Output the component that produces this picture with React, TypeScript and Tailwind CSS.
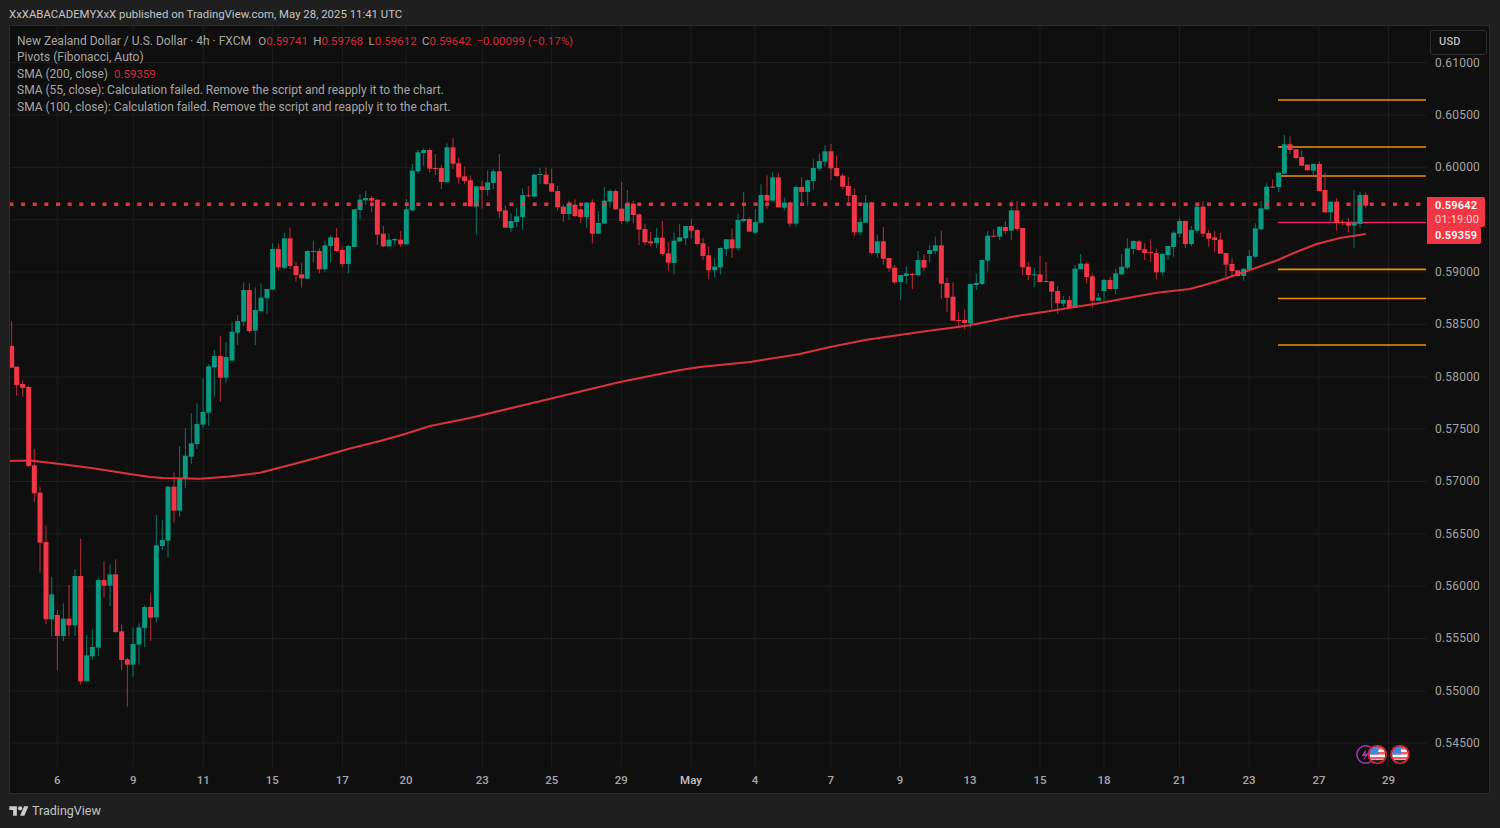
const GREEN = '#089981'
const RED = '#f23645'

type Candle = [number, number, number, number, number, 'r' | 'g'] // cx, bodyTop, bodyBottom, high, low, colour

// traced from 3x crops, so every row is in crop pixels
const traces: { x: number; y: number; rows: Candle[] }[] = [
  {
    x: 0,
    y: 320,
    rows: [
      [35, 78, 143, 5, 143, 'r'], [50, 140, 195, 140, 227, 'r'], [68, 192, 204, 180, 230, 'r'], [86, 201, 438, 197, 442, 'r'],
      [103, 436, 520, 387, 546, 'r'], [120, 518, 668, 500, 758, 'r'], [138, 666, 898, 616, 913, 'r'], [155, 823, 898, 771, 950, 'g'],
      [172, 885, 948, 870, 1050, 'r'], [190, 896, 948, 850, 963, 'g'], [207, 896, 916, 795, 950, 'r'], [225, 768, 916, 747, 948, 'g'],
      [242, 768, 1084, 657, 1094, 'r'], [260, 1006, 1084, 945, 1084, 'g'], [277, 981, 1009, 928, 1020, 'g'], [295, 780, 983, 775, 1009, 'g'],
      [312, 780, 797, 724, 834, 'r'], [330, 763, 797, 733, 858, 'g'], [347, 763, 936, 718, 939, 'r'], [365, 934, 1020, 913, 1050, 'r'],
      [382, 1018, 1034, 1012, 1160, 'r'], [399, 972, 1034, 922, 1070, 'g'], [417, 922, 974, 910, 1034, 'g'], [434, 861, 924, 856, 982, 'g'],
      [452, 861, 893, 820, 963, 'r'], [469, 676, 892, 585, 908, 'g'], [487, 660, 678, 600, 692, 'g'], [504, 500, 662, 498, 712, 'g'],
      [522, 500, 572, 457, 608, 'r'], [539, 475, 572, 378, 590, 'g'], [556, 407, 477, 325, 505, 'g'], [574, 370, 410, 279, 432, 'g'],
      [591, 312, 372, 250, 387, 'g'], [609, 276, 314, 175, 325, 'g'], [626, 139, 278, 133, 317, 'g'], [643, 108, 142, 90, 232, 'g'],
      [661, 108, 173, 48, 246, 'r'], [678, 111, 173, 67, 188, 'g'], [696, 35, 122, 6, 122, 'g'],
    ],
  },
  {
    x: 205,
    y: 220,
    rows: [
      [98, 303, 338, 285, 375, 'g'], [116, 210, 305, 187, 318, 'g'], [133, 210, 333, 190, 338, 'r'], [151, 270, 332, 202, 375, 'g'],
      [168, 233, 274, 190, 274, 'g'], [186, 207, 235, 207, 282, 'g'], [203, 87, 209, 70, 209, 'g'], [220, 87, 142, 70, 152, 'r'],
      [238, 55, 143, 38, 148, 'g'], [255, 55, 138, 22, 148, 'r'], [273, 138, 165, 125, 185, 'r'], [290, 163, 175, 128, 203, 'r'],
      [307, 93, 176, 90, 178, 'g'],
    ],
  },
  {
    x: 260,
    y: 130,
    rows: [
      [160, 363, 366, 332, 397, 'g'], [178, 363, 418, 355, 430, 'r'], [195, 346, 418, 332, 427, 'g'], [212, 322, 348, 316, 398, 'g'],
      [230, 323, 363, 294, 366, 'r'], [247, 360, 402, 350, 410, 'r'], [265, 348, 402, 345, 430, 'g'], [283, 238, 351, 238, 351, 'g'],
      [300, 209, 240, 192, 267, 'g'], [317, 204, 211, 183, 224, 'g'], [335, 204, 212, 198, 246, 'r'], [352, 209, 314, 207, 345, 'r'],
      [370, 311, 349, 288, 352, 'r'], [387, 329, 349, 310, 351, 'g'], [404, 327, 331, 325, 346, 'g'], [422, 329, 343, 303, 351, 'r'],
      [439, 238, 343, 207, 343, 'g'], [457, 122, 241, 102, 243, 'g'], [474, 67, 124, 60, 131, 'g'], [491, 60, 69, 55, 107, 'g'],
      [509, 60, 116, 55, 128, 'r'], [526, 114, 116, 72, 135, 'r'], [544, 114, 156, 105, 177, 'r'], [561, 52, 157, 40, 157, 'g'],
      [579, 52, 101, 24, 117, 'r'], [596, 100, 142, 84, 160, 'r'], [614, 139, 153, 110, 163, 'r'], [631, 151, 229, 136, 230, 'r'],
      [649, 169, 230, 169, 314, 'g'], [666, 169, 180, 154, 236, 'r'], [683, 157, 180, 122, 197, 'g'], [700, 124, 159, 117, 177, 'g'],
      [718, 124, 244, 72, 264, 'r'], [736, 241, 293, 226, 294, 'r'], [753, 273, 294, 250, 306, 'g'], [770, 259, 276, 233, 291, 'g'],
      [788, 195, 261, 175, 300, 'g'], [805, 196, 198, 168, 201, 'r'], [823, 134, 200, 130, 200, 'g'], [840, 132, 135, 113, 163, 'g'],
      [858, 134, 162, 113, 165, 'r'], [875, 160, 185, 116, 187, 'r'], [893, 183, 232, 168, 241, 'r'],
    ],
  },
  {
    x: 560,
    y: 130,
    rows: [
      [10, 230, 252, 223, 276, 'r'], [27, 220, 252, 212, 270, 'g'], [45, 224, 258, 208, 262, 'r'], [62, 238, 261, 220, 279, 'r'],
      [80, 218, 261, 216, 293, 'g'], [97, 218, 311, 208, 340, 'r'], [115, 279, 311, 243, 311, 'g'], [133, 212, 281, 171, 281, 'g'],
      [150, 183, 215, 178, 233, 'g'], [167, 183, 238, 178, 240, 'r'], [185, 236, 273, 156, 282, 'r'], [202, 220, 274, 180, 279, 'g'],
      [220, 221, 255, 212, 279, 'r'], [237, 253, 299, 250, 345, 'r'], [255, 297, 337, 282, 346, 'r'], [272, 334, 340, 306, 349, 'r'],
      [290, 323, 339, 293, 354, 'g'], [307, 323, 372, 273, 378, 'r'], [325, 370, 398, 336, 422, 'r'], [342, 332, 399, 308, 433, 'g'],
      [359, 322, 334, 282, 336, 'g'], [377, 288, 325, 288, 346, 'g'], [394, 288, 302, 267, 326, 'r'], [412, 300, 342, 296, 346, 'r'],
      [429, 340, 378, 324, 390, 'r'], [446, 376, 421, 349, 448, 'r'], [464, 410, 421, 384, 442, 'g'], [481, 354, 412, 352, 433, 'g'],
      [499, 328, 357, 328, 379, 'g'], [516, 328, 355, 296, 384, 'r'], [534, 270, 355, 250, 363, 'g'], [551, 267, 273, 186, 276, 'g'],
      [568, 267, 305, 262, 306, 'r'], [586, 276, 308, 237, 312, 'g'], [603, 195, 278, 163, 278, 'g'], [621, 195, 212, 136, 236, 'r'],
      [638, 142, 212, 127, 212, 'g'], [655, 142, 232, 130, 233, 'r'], [673, 218, 233, 203, 241, 'g'], [690, 218, 281, 218, 290, 'r'],
      [708, 171, 281, 166, 290, 'g'], [725, 171, 186, 142, 219, 'r'], [743, 151, 186, 148, 228, 'g'], [760, 114, 153, 88, 180, 'g'],
      [778, 93, 116, 70, 123, 'g'], [795, 64, 95, 46, 110, 'g'], [813, 64, 115, 42, 150, 'r'], [830, 114, 138, 76, 141, 'r'],
      [848, 137, 170, 130, 177, 'r'], [865, 168, 197, 141, 217, 'r'], [883, 195, 307, 175, 320, 'r'], [900, 276, 307, 264, 316, 'g'],
      [917, 218, 278, 195, 278, 'g'], [935, 218, 369, 215, 374, 'r'], [952, 334, 369, 314, 383, 'g'], [970, 334, 386, 291, 404, 'r'],
      [987, 384, 415, 384, 425, 'r'], [1004, 413, 457, 405, 463, 'r'], [1022, 435, 456, 435, 510, 'g'], [1039, 430, 438, 409, 461, 'g'],
    ],
  },
  {
    x: 850,
    y: 180,
    rows: [
      [187, 282, 285, 278, 327, 'r'], [204, 240, 286, 213, 287, 'g'], [222, 240, 263, 222, 272, 'r'], [239, 210, 222, 195, 248, 'g'],
      [256, 196, 213, 170, 222, 'g'], [274, 196, 311, 152, 356, 'r'], [291, 309, 353, 294, 396, 'r'], [309, 350, 422, 307, 422, 'r'],
      [326, 420, 423, 396, 445, 'r'], [344, 420, 429, 388, 449, 'r'], [361, 312, 430, 312, 445, 'g'], [379, 309, 315, 280, 330, 'g'],
      [396, 240, 312, 238, 315, 'g'], [413, 167, 242, 153, 275, 'g'], [431, 167, 170, 147, 172, 'r'], [449, 140, 170, 140, 181, 'g'],
      [466, 141, 153, 124, 162, 'r'], [484, 91, 152, 62, 179, 'g'], [501, 91, 147, 63, 152, 'r'], [518, 144, 262, 143, 286, 'r'],
      [535, 260, 285, 246, 300, 'r'], [553, 283, 286, 263, 321, 'g'], [570, 283, 306, 228, 308, 'r'], [588, 303, 306, 246, 307, 'r'],
      [605, 304, 335, 304, 387, 'r'], [623, 333, 370, 319, 402, 'r'], [640, 360, 371, 348, 380, 'g'], [658, 360, 384, 348, 386, 'r'],
      [675, 266, 384, 255, 384, 'g'], [692, 251, 268, 222, 269, 'g'], [710, 251, 291, 246, 310, 'r'], [727, 289, 362, 280, 384, 'r'],
      [745, 353, 362, 339, 362, 'g'], [762, 300, 333, 296, 362, 'g'], [780, 300, 327, 290, 328, 'r'], [797, 280, 327, 266, 342, 'g'],
      [815, 260, 283, 222, 285, 'g'], [832, 205, 263, 175, 268, 'g'], [850, 183, 207, 179, 224, 'g'], [867, 184, 210, 180, 212, 'r'],
      [884, 208, 219, 190, 240, 'r'], [902, 216, 218, 178, 246, 'r'], [919, 219, 277, 206, 298, 'r'], [937, 222, 277, 218, 286, 'g'],
      [954, 198, 225, 198, 240, 'g'], [971, 158, 201, 154, 230, 'g'], [989, 123, 161, 113, 172, 'g'], [1006, 123, 192, 122, 204, 'r'],
      [1024, 150, 192, 138, 198, 'g'], [1041, 80, 152, 68, 160, 'g'], [1059, 80, 161, 63, 172, 'r'], [1076, 159, 176, 150, 200, 'r'],
      [1094, 172, 180, 153, 217, 'r'], [1111, 179, 221, 158, 222, 'r'], [1128, 219, 254, 218, 290, 'r'], [1146, 252, 273, 234, 290, 'r'],
      [1163, 271, 288, 271, 290, 'r'], [1181, 266, 288, 266, 302, 'g'], [1198, 228, 269, 210, 269, 'g'],
    ],
  },
  {
    x: 1250,
    y: 20,
    rows: [
      [16, 625, 710, 610, 715, 'g'], [33, 565, 628, 543, 628, 'g'], [50, 500, 568, 490, 570, 'g'], [68, 500, 503, 478, 503, 'r'],
      [86, 458, 501, 455, 516, 'g'], [103, 373, 461, 345, 463, 'g'], [120, 373, 390, 350, 402, 'r'], [138, 388, 414, 388, 418, 'r'],
      [155, 411, 437, 392, 438, 'r'], [172, 434, 451, 434, 452, 'r'], [190, 432, 452, 430, 470, 'g'], [208, 432, 513, 423, 513, 'r'],
      [225, 510, 577, 458, 577, 'r'], [242, 545, 577, 545, 603, 'g'], [260, 545, 609, 535, 632, 'r'], [277, 606, 609, 600, 617, 'r'],
      [295, 608, 617, 594, 637, 'r'], [312, 608, 617, 510, 684, 'g'], [330, 525, 612, 515, 624, 'g'], [347, 525, 557, 517, 563, 'r'],
    ],
  },
]

const sma200 =
  'M10 461 L30 460.5 L60 464 L93 468.3 L120 472.5 L150 477 L163 478 L200 478.7 L230 476.5 L260 472.7 L290 465 L320 457 L350 448.5 L380 441 L405 434 L430 426 L470 418 L520 406 L570 394 L620 382 L680 370 L700 367 L750 362 L800 354 L830 347 L866.7 339.7 L920 332 L966.7 325.7 L1016.7 316 L1050 311 L1100 303 L1156.7 292.7 L1190 289 L1215 282 L1240 273.5 L1250 270 L1276.7 260.5 L1295 252.5 L1316.7 244 L1340 238 L1365.7 234'

const priceRows = [
  '0.61000', '0.60500', '0.60000', '0.59500', '0.59000', '0.58500', '0.58000', '0.57500', '0.57000', '0.56500', '0.56000', '0.55500', '0.55000', '0.54500',
]
// 0.59500 sits under the live price tags
const hiddenPrice = '0.59500'

const gridY = [62.5, 115, 167.3, 219.7, 272, 324.5, 377, 429, 481.5, 534, 586, 638.5, 691, 743]
const timeTicks = [
  { x: 57.3, label: '6' }, { x: 133.3, label: '9' }, { x: 203.3, label: '11' }, { x: 272.3, label: '15' }, { x: 342.3, label: '17' },
  { x: 406, label: '20' }, { x: 482.3, label: '23' }, { x: 551.7, label: '25' }, { x: 621.3, label: '29' }, { x: 691, label: 'May', strong: true },
  { x: 755, label: '4' }, { x: 830.7, label: '7' }, { x: 900, label: '9' }, { x: 970, label: '13' }, { x: 1040, label: '15' },
  { x: 1104, label: '18' }, { x: 1179.5, label: '21' }, { x: 1249, label: '23' }, { x: 1319, label: '27' }, { x: 1388.5, label: '29' },
]
const pivots = [100, 147, 176, 269.3, 298.5, 345]

function Flag({ cx, id }: { cx: number; id: string }) {
  return (
    <g>
      <clipPath id={id}>
        <circle cx={cx} cy={754.5} r={8} />
      </clipPath>
      <g clipPath={`url(#${id})`}>
        <rect x={cx - 8} y={746} width={16} height={16} fill="#f4f4f4" />
        <rect x={cx - 8} y={747} width={16} height={2.5} fill="#ef5a63" />
        <rect x={cx - 8} y={752} width={16} height={2.5} fill="#ef5a63" />
        <rect x={cx - 8} y={757} width={16} height={2.5} fill="#ef5a63" />
        <rect x={cx - 8} y={746} width={9} height={8.5} fill="#3d87e0" />
        <rect x={cx - 8} y={760} width={16} height={3} fill="#26262c" />
      </g>
      <circle cx={cx} cy={754.5} r={9} fill="none" stroke="#d8202f" strokeWidth={1.6} />
    </g>
  )
}

function Chart() {
  return (
    <svg viewBox="10 26 1417 741" width={1417} height={741} className="block">
      {gridY.map((y) => (
        <line key={y} x1={10} x2={1427} y1={y} y2={y} stroke="#1d1d1d" />
      ))}
      {timeTicks.map((t) => (
        <line key={t.x} x1={t.x} x2={t.x} y1={26} y2={767} stroke="#1d1d1d" />
      ))}
      {pivots.map((y) => (
        <line key={y} x1={1278} x2={1426} y1={y} y2={y} stroke="#f0900c" strokeWidth={1.7} />
      ))}
      <line x1={1278} x2={1426} y1={222.5} y2={222.5} stroke="#e91e63" strokeWidth={1.7} />
      {traces.map((t) =>
        t.rows.map(([cx, top, bottom, high, low, c]) => {
          const x = t.x + cx / 3
          const color = c === 'g' ? GREEN : RED
          return (
            <g key={`${t.x}-${cx}`}>
              <line x1={x} x2={x} y1={t.y + high / 3} y2={t.y + low / 3} stroke={color} strokeOpacity={0.75} />
              <rect x={x - 2.5} y={t.y + top / 3} width={5} height={Math.max((bottom - top) / 3, 1)} fill={color} />
            </g>
          )
        }),
      )}
      <path d={sma200} fill="none" stroke={RED} strokeWidth={2} strokeOpacity={0.9} strokeLinejoin="round" />
      <line x1={9.5} x2={1427} y1={204.3} y2={204.3} stroke={RED} strokeWidth={3.5} strokeDasharray="4 7.626" strokeOpacity={0.92} />
      <circle cx={1365.7} cy={754.5} r={8.8} fill="none" stroke="#9c3bb0" strokeWidth={1.6} />
      <path d="M1366 749 L1361.5 756 L1365 756 L1363.5 760 L1369 753.5 L1365.5 753.5 Z" fill="#9c3bb0" />
      <Flag cx={1377.3} id="flag-a" />
      <Flag cx={1400} id="flag-b" />
    </svg>
  )
}

export default function App() {
  return (
    <div className="flex h-[828px] w-[1500px] flex-col overflow-hidden bg-[#1f1f1f] font-[Roboto,sans-serif]">
      <header className="flex h-[25px] shrink-0 items-center pl-[9px] pt-[4px] text-[11.4px] text-[#c4c4c4]">
        XxXABACADEMYXxX published on TradingView.com, May 28, 2025 11:41 UTC
      </header>

      <div className="ml-[9px] flex h-[769px] w-[1481px] shrink-0 border border-[#2b2b2b] bg-[#0f0f0f]">
        <div className="relative w-[1417px] shrink-0">
          <Chart />
          <div className="absolute left-[7px] top-[6.5px] text-[12px] leading-[16.5px] text-[#a6a6a6]">
            <div className="flex gap-[5.3px]">
              <span className="mr-[2px]">New Zealand Dollar / U.S. Dollar · 4h · FXCM</span>
              <span className="text-[11.5px]">O<span className="text-[#d52a3c]">0.59741</span></span>
              <span className="text-[11.5px]">H<span className="text-[#d52a3c]">0.59768</span></span>
              <span className="text-[11.5px]">L<span className="text-[#d52a3c]">0.59612</span></span>
              <span className="text-[11.5px]">C<span className="text-[#d52a3c]">0.59642</span></span>
              <span className="text-[11.5px] text-[#d52a3c]">−0.00099 (−0.17%)</span>
            </div>
            <div>Pivots (Fibonacci, Auto)</div>
            <div className="flex gap-[6px]">
              <span>SMA (200, close)</span>
              <span className="text-[11.5px] text-[#d52a3c]">0.59359</span>
            </div>
            <div>SMA (55, close): Calculation failed. Remove the script and reapply it to the chart.</div>
            <div>SMA (100, close): Calculation failed. Remove the script and reapply it to the chart.</div>
          </div>
          <div className="relative h-[26px] text-[11.5px] font-medium text-[#a8a8a8]">
            {timeTicks.map((t) => (
              <span
                key={t.x}
                className={`absolute top-[5px] -translate-x-1/2 ${t.strong ? 'text-[#c4c4c4]' : ''}`}
                style={{ left: t.x - 10 }}
              >
                {t.label}
              </span>
            ))}
          </div>
        </div>

        <div className="relative flex-1 overflow-hidden pt-[10.5px] pl-[8px] text-[12px] tracking-[0.2px] text-[#a3a3a3]">
          {priceRows.map((p) => (
            <div key={p} className={`flex h-[52.35px] items-center ${p === hiddenPrice ? 'opacity-0' : ''}`}>
              {p}
            </div>
          ))}
          <div className="absolute left-[3px] top-[4px] flex h-[25px] w-[57px] items-center rounded-[3px] border border-[#2d2d2d] bg-[#0f0f0f] pl-[8px] text-[11px] font-medium text-[#bdbdbd]">
            USD
          </div>
          <div className="absolute left-0 top-[171px] text-[11px] font-semibold leading-[14px] text-white">
            <div className="flex h-[30px] w-[58px] flex-col justify-center rounded-r-[2px] bg-[#f23645] pl-[8px] pt-[2px]">
              <span>0.59642</span>
              <span className="font-normal text-[#fbd0d5]">01:19:00</span>
            </div>
            <div className="flex h-[17px] w-[54px] items-center rounded-r-[2px] bg-[#f23645] pl-[8px]">0.59359</div>
          </div>
        </div>
      </div>

      <footer className="flex flex-1 items-center gap-[3px] pl-[9px] text-[12.5px] text-[#c4c4c4]">
        <svg viewBox="0 0 36 28" width={20} height={15} fill="#cccccc">
          <path d="M14 22H7V11H0V4h14v18zM28 22h-8l7.5-18h8L28 22z" />
          <circle cx={20} cy={8} r={4} />
        </svg>
        <span>TradingView</span>
      </footer>
    </div>
  )
}
